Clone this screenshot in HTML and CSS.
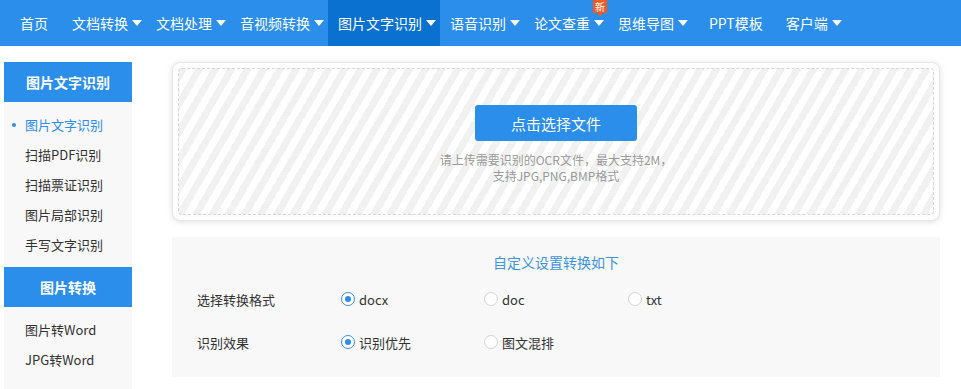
FILE: index.html
```html
<!DOCTYPE html>
<html lang="zh-CN">
<head>
<meta charset="utf-8">
<title>图片文字识别</title>
<link rel="stylesheet" href="styles.css">
</head>
<body>
<nav class="topnav">
  <a class="nav-item">首页</a>
  <a class="nav-item dd">文档转换<i class="caret"></i></a>
  <a class="nav-item dd">文档处理<i class="caret"></i></a>
  <a class="nav-item dd">音视频转换<i class="caret"></i></a>
  <a class="nav-item dd active">图片文字识别<i class="caret"></i></a>
  <a class="nav-item dd">语音识别<i class="caret"></i></a>
  <a class="nav-item dd has-badge">论文查重<i class="caret"></i><span class="badge">新</span></a>
  <a class="nav-item dd">思维导图<i class="caret"></i></a>
  <a class="nav-item ppt">PPT模板</a>
  <a class="nav-item dd">客户端<i class="caret"></i></a>
</nav>

<div class="page">
  <aside class="sidebar">
    <div class="side-head">图片文字识别</div>
    <ul class="side-list">
      <li class="current">图片文字识别</li>
      <li>扫描PDF识别</li>
      <li>扫描票证识别</li>
      <li>图片局部识别</li>
      <li>手写文字识别</li>
    </ul>
    <div class="side-head">图片转换</div>
    <ul class="side-list">
      <li>图片转Word</li>
      <li>JPG转Word</li>
    </ul>
  </aside>

  <main class="main">
    <section class="upload-card">
      <div class="drop-zone">
        <button class="pick-btn">点击选择文件</button>
        <p class="hint">请上传需要识别的OCR文件，最大支持2M，<br>支持JPG,PNG,BMP格式</p>
      </div>
    </section>

    <section class="settings">
      <h3 class="settings-title">自定义设置转换如下</h3>
      <div class="opt-row">
        <span class="opt-label">选择转换格式</span>
        <label class="radio checked"><i class="dot"></i>docx</label>
        <label class="radio"><i class="dot"></i>doc</label>
        <label class="radio"><i class="dot"></i>txt</label>
      </div>
      <div class="opt-row">
        <span class="opt-label">识别效果</span>
        <label class="radio checked"><i class="dot"></i>识别优先</label>
        <label class="radio"><i class="dot"></i>图文混排</label>
      </div>
    </section>
  </main>
</div>
</body>
</html>
```

FILE: styles.css
```css
* { box-sizing: border-box; }
html, body { margin: 0; padding: 0; background: #fff; }
body {
  font-family: "Noto Sans CJK SC", "Noto Sans", sans-serif;
  color: #333;
  font-size: 14px;
}
ul { list-style: none; margin: 0; padding: 0; }

.topnav {
  display: flex;
  height: 46px;
  background: #2a8eea;
  padding-left: 10px;
}
.nav-item {
  position: relative;
  display: flex;
  align-items: center;
  padding: 0 14px 0 10px;
  color: #fff;
  font-size: 14px;
  line-height: 46px;
  white-space: nowrap;
}
.nav-item.dd { padding-right: 4px; }
.nav-item.ppt { padding: 0 13px 0 17px; }
.nav-item.active { background: #0b71d1; }
.caret {
  display: inline-block;
  width: 0; height: 0;
  margin-left: 4px;
  border-left: 5px solid transparent;
  border-right: 5px solid transparent;
  border-top: 6px solid #fff;
}
.badge {
  position: absolute;
  top: 0;
  left: 69px;
  width: 14px;
  height: 13px;
  background: #f25a1f;
  color: #fff;
  font-size: 10px;
  line-height: 13px;
  text-align: center;
}
.badge::after {
  content: "";
  position: absolute;
  left: 4px;
  top: 13px;
  border-left: 3px solid transparent;
  border-right: 3px solid transparent;
  border-top: 3px solid #f25a1f;
}

.page {
  display: flex;
  align-items: flex-start;
  gap: 40px;
  padding: 16px 0 0 4px;
}

.sidebar {
  width: 128px;
  flex: none;
  background: #f8f8f8;
  padding-bottom: 7px;
}
.side-head {
  height: 40px;
  line-height: 40px;
  background: #2a8eea;
  color: #fff;
  font-weight: bold;
  text-align: center;
  font-size: 14px;
}
.side-list { padding: 8px 0 7px; }
.side-list li {
  position: relative;
  height: 30px;
  line-height: 30px;
  padding-left: 21px;
  font-size: 13px;
  color: #333;
}
.side-list li.current { color: #2a8eea; }
.side-list li.current::before {
  content: "";
  position: absolute;
  left: 8px;
  top: 13px;
  width: 4px;
  height: 4px;
  border-radius: 50%;
  background: #2a8eea;
}

.main {
  width: 768px;
  flex: none;
  display: flex;
  flex-direction: column;
  gap: 16px;
}

.upload-card {
  height: 159px;
  padding: 5px;
  background: #fff;
  border: 1px solid #e6e6e6;
  border-radius: 8px;
  box-shadow: 0 1px 6px rgba(0, 0, 0, 0.12);
}
.drop-zone {
  height: 100%;
  border: 1px dashed #d6d6d6;
  border-radius: 4px;
  background: repeating-linear-gradient(120deg, #f1f1f1 0 7px, #ffffff 7px 14px);
  display: flex;
  flex-direction: column;
  align-items: center;
  padding-top: 36px;
}
.pick-btn {
  width: 162px;
  height: 36px;
  border: none;
  border-radius: 3px;
  background: #2a8eea;
  color: #fff;
  font-family: inherit;
  font-size: 15px;
  cursor: pointer;
}
.hint {
  margin: 11px 0 0;
  font-size: 12px;
  line-height: 16px;
  color: #999;
  text-align: center;
}

.settings {
  height: 140px;
  background: #f8f8f8;
  padding: 15px 0 0 25px;
}
.settings-title {
  margin: 0 0 16px -25px;
  font-size: 14px;
  font-weight: normal;
  line-height: 20px;
  color: #3c94e0;
  text-align: center;
}
.opt-row {
  display: grid;
  grid-template-columns: 144px 143px 144px 144px;
  align-items: center;
  height: 22px;
  margin-bottom: 21px;
}
.opt-label { font-size: 13px; color: #333; }
.radio {
  display: flex;
  align-items: center;
  gap: 4px;
  font-size: 13px;
  color: #333;
}
.dot {
  width: 14px;
  height: 14px;
  border-radius: 50%;
  border: 1px solid #d4d4d4;
  background: #fff;
  flex: none;
  position: relative;
}
.radio.checked .dot { border-color: #3d8fe0; }
.radio.checked .dot::after {
  content: "";
  position: absolute;
  left: 3px;
  top: 3px;
  width: 6px;
  height: 6px;
  border-radius: 50%;
  background: #2a8eea;
}
```
